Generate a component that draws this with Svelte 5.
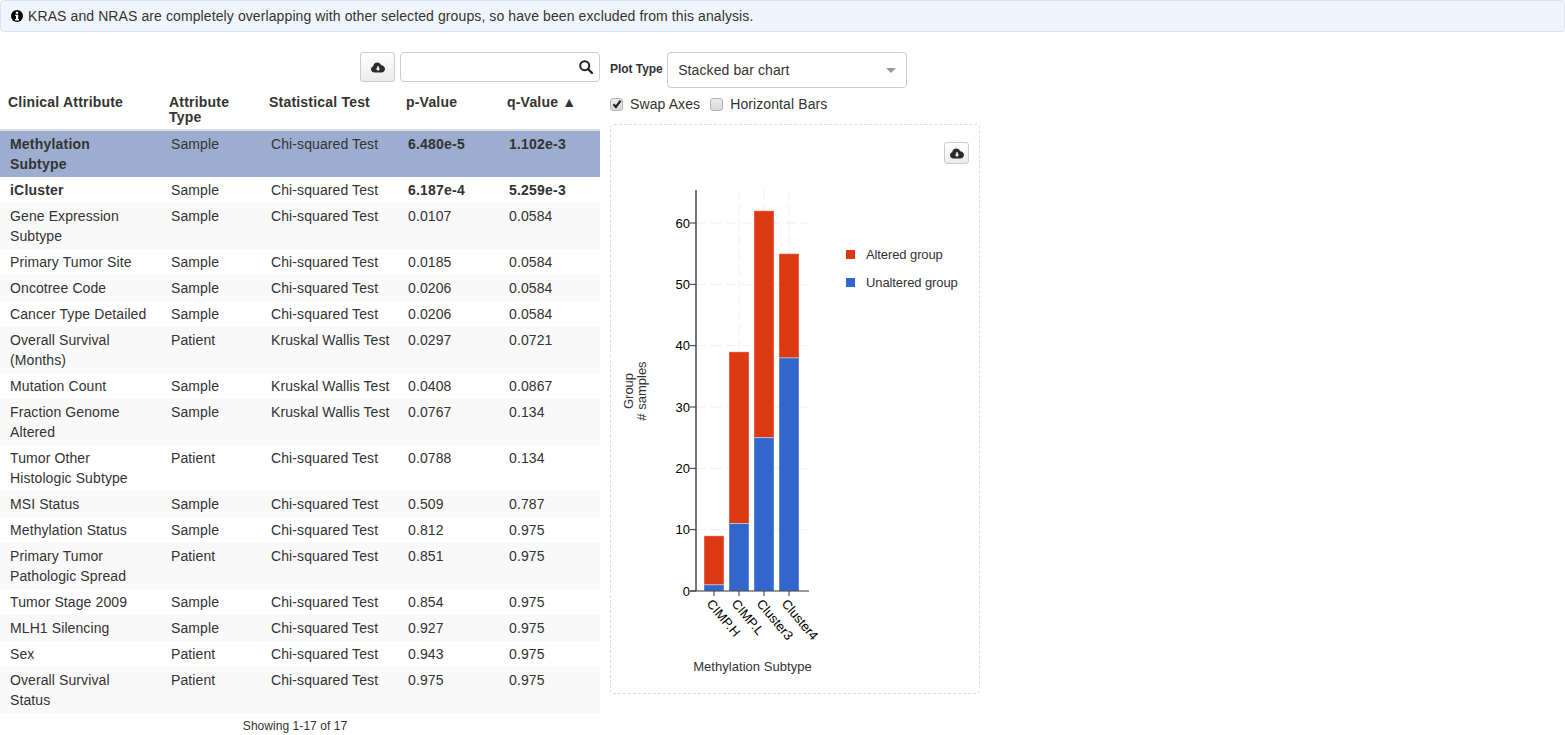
<script>
	const rows = [
		['Methylation Subtype', 'Sample', 'Chi-squared Test', '6.480e-5', '1.102e-3', 'sig'],
		['iCluster', 'Sample', 'Chi-squared Test', '6.187e-4', '5.259e-3', 'sig'],
		['Gene Expression Subtype', 'Sample', 'Chi-squared Test', '0.0107', '0.0584'],
		['Primary Tumor Site', 'Sample', 'Chi-squared Test', '0.0185', '0.0584'],
		['Oncotree Code', 'Sample', 'Chi-squared Test', '0.0206', '0.0584'],
		['Cancer Type Detailed', 'Sample', 'Chi-squared Test', '0.0206', '0.0584'],
		['Overall Survival (Months)', 'Patient', 'Kruskal Wallis Test', '0.0297', '0.0721'],
		['Mutation Count', 'Sample', 'Kruskal Wallis Test', '0.0408', '0.0867'],
		['Fraction Genome Altered', 'Sample', 'Kruskal Wallis Test', '0.0767', '0.134'],
		['Tumor Other Histologic Subtype', 'Patient', 'Chi-squared Test', '0.0788', '0.134'],
		['MSI Status', 'Sample', 'Chi-squared Test', '0.509', '0.787'],
		['Methylation Status', 'Sample', 'Chi-squared Test', '0.812', '0.975'],
		['Primary Tumor Pathologic Spread', 'Patient', 'Chi-squared Test', '0.851', '0.975'],
		['Tumor Stage 2009', 'Sample', 'Chi-squared Test', '0.854', '0.975'],
		['MLH1 Silencing', 'Sample', 'Chi-squared Test', '0.927', '0.975'],
		['Sex', 'Patient', 'Chi-squared Test', '0.943', '0.975'],
		['Overall Survival Status', 'Patient', 'Chi-squared Test', '0.975', '0.975']
	];

	// chart values, altered on top of unaltered
	const bars = [
		{ name: 'CIMP.H', unaltered: 1, altered: 8 },
		{ name: 'CIMP.L', unaltered: 11, altered: 28 },
		{ name: 'Cluster3', unaltered: 25, altered: 37 },
		{ name: 'Cluster4', unaltered: 38, altered: 17 }
	];
	const ticks = [0, 10, 20, 30, 40, 50, 60];
	const y0 = 466;
	const unit = 6.133;
	const yOf = (v) => y0 - v * unit;
	const xOf = (i) => 93 + i * 25;
</script>

{#snippet cloud()}
	<svg class="cloud" viewBox="0 0 16 12" width="14" height="11" aria-hidden="true">
		<path d="M3.800 11.600C1.700 11.600 0 10 0 8 0 6.400 1.100 5.100 2.500 4.600 2.700 2.200 4.700.3 7.200.3c2 0 3.700 1.200 4.400 3C14 3.400 16 5.200 16 7.600c0 2.200-1.900 4-4.200 4z" fill="#2b2b2b" />
		<path d="M7 4.600h2v2.500h1.700L8 9.900 5.300 7.100H7z" fill="#f4f4f4" />
	</svg>
{/snippet}

<div class="alert">
	<svg class="info" viewBox="0 0 12 12" width="12" height="12" aria-hidden="true">
		<circle cx="6" cy="6" r="6" fill="#000" />
		<rect x="4.800" y="1.700" width="2.400" height="2.100" fill="#fff" />
		<path d="M4.200 4.800h3v4.200h.8v1.400H4.100V9h.9V6.100h-.8z" fill="#fff" />
	</svg>
	<span>KRAS and NRAS are completely overlapping with other selected groups, so have been excluded from this analysis.</span>
</div>

<div class="page">
	<div class="left">
		<div class="toolbar">
			<button type="button" class="btn">{@render cloud()}</button>
			<div class="search">
				<input type="text" />
				<svg viewBox="0 0 14 14" width="14" height="14" aria-hidden="true">
					<circle cx="5.700" cy="5.700" r="4.500" fill="none" stroke="#222" stroke-width="2" />
					<path d="M9 9l4 4" stroke="#222" stroke-width="2.400" stroke-linecap="round" />
				</svg>
			</div>
		</div>

		<table>
			<colgroup>
				<col style="width:161px" />
				<col style="width:100px" />
				<col style="width:137px" />
				<col style="width:101px" />
				<col style="width:101px" />
			</colgroup>
			<thead>
				<tr>
					<th>Clinical Attribute</th>
					<th>Attribute Type</th>
					<th>Statistical Test</th>
					<th>p-Value</th>
					<th>q-Value ▲</th>
				</tr>
			</thead>
			<tbody>
				{#each rows as r, i}
					<tr class:selected={i === 0} class:odd={i % 2 === 0 && i > 0}>
						<td class="name" class:bold={r[5]}>{r[0]}</td>
						<td>{r[1]}</td>
						<td>{r[2]}</td>
						<td class:bold={r[5]}>{r[3]}</td>
						<td class:bold={r[5]}>{r[4]}</td>
					</tr>
				{/each}
			</tbody>
		</table>
		<div class="showing">Showing 1-17 of 17</div>
	</div>

	<div class="right">
		<div class="plot-type">
			<span class="plot-label">Plot Type</span>
			<div class="select">
				<span>Stacked bar chart</span>
				<i class="caret"></i>
			</div>
		</div>
		<div class="checks">
			<label>
				<span class="box">
					<svg viewBox="0 0 10 10" width="10" height="10" aria-hidden="true">
						<path d="M1.500 5.200l2.400 2.700 4.700-6.300" fill="none" stroke="#222" stroke-width="2.200" />
					</svg>
				</span>
				Swap Axes
			</label>
			<label><span class="box"></span> Horizontal Bars</label>
		</div>

		<div class="chart">
			<button type="button" class="btn small">{@render cloud()}</button>
			<svg class="plot" width="368" height="568" viewBox="0 0 368 568">
				<!-- grid -->
				{#each ticks.slice(1) as t}
					<line x1="85" x2="197" y1={yOf(t)} y2={yOf(t)} class="grid" />
				{/each}
				{#each [128, 153, 178] as x}
					<line x1={x} x2={x} y1="65" y2={y0} class="grid" />
				{/each}

				<!-- bars -->
				{#each bars as b, i}
					<rect x={xOf(i)} y={yOf(b.unaltered + b.altered)} width="20" height={b.altered * unit} fill="#dc3912" class="bar" />
					<rect x={xOf(i)} y={yOf(b.unaltered)} width="20" height={b.unaltered * unit} fill="#3366cc" class="bar" />
				{/each}

				<!-- axes -->
				<line x1="85" x2="85" y1="65" y2={y0} stroke="#757575" stroke-width="2" />
				<line x1="79" x2="198" y1={y0} y2={y0} stroke="#333" stroke-width="1" />
				{#each ticks as t}
					<line x1="79" x2="85" y1={yOf(t)} y2={yOf(t)} stroke="#333" />
					<text x="79" y={yOf(t) + 4.500} text-anchor="end" class="tick">{t}</text>
				{/each}
				{#each bars as b, i}
					<line x1={xOf(i) + 10} x2={xOf(i) + 10} y1={y0} y2={y0 + 5} stroke="#333" />
					<text transform="translate({xOf(i) + 2} {y0 + 13}) rotate(50)" class="tick">{b.name}</text>
				{/each}

				<text transform="translate(22 266) rotate(-90)" text-anchor="middle" class="label">Group</text>
				<text transform="translate(35 266) rotate(-90)" text-anchor="middle" class="label"># samples</text>
				<text x="141.500" y="546" text-anchor="middle" class="label title">Methylation Subtype</text>

				<!-- legend -->
				<rect x="235" y="125" width="9" height="9" fill="#dc3912" />
				<text x="255" y="134" class="label legend">Altered group</text>
				<rect x="235" y="153" width="9" height="9" fill="#3366cc" />
				<text x="255" y="162" class="label legend">Unaltered group</text>
			</svg>
		</div>
	</div>
</div>

<style>
	:global(body) {
		font-family: 'Liberation Sans', Arial, sans-serif;
		font-size: 14px;
		letter-spacing: 0.1px;
		color: #333;
		background: #fff;
		line-height: 20px;
	}

	.alert {
		display: flex;
		align-items: center;
		gap: 5px;
		height: 32px;
		box-sizing: border-box;
		padding: 0 10px;
		background: #f0f5fd;
		border: 1px solid #dde3ea;
		border-radius: 4px;
		margin-bottom: 20px;
	}

	.page {
		display: flex;
		gap: 10px;
		align-items: flex-start;
	}

	.left {
		width: 600px;
	}

	.toolbar {
		display: flex;
		justify-content: flex-end;
		gap: 5px;
		height: 30px;
	}

	.btn {
		display: flex;
		align-items: center;
		justify-content: center;
		width: 35px;
		height: 30px;
		padding: 0;
		border: 1px solid #ccc;
		border-radius: 3px;
		background: linear-gradient(#fff, #ebebeb);
	}

	.btn.small {
		position: absolute;
		top: 17px;
		right: 10px;
		width: 25px;
		height: 22px;
	}

	.search {
		position: relative;
		width: 200px;
	}

	.search input {
		width: 100%;
		height: 30px;
		box-sizing: border-box;
		border: 1px solid #ccc;
		border-radius: 4px;
		outline: none;
	}

	.search svg {
		position: absolute;
		right: 7px;
		top: 8px;
	}

	table {
		width: 600px;
		table-layout: fixed;
		border-collapse: collapse;
		margin-top: 10px;
	}

	th {
		font-size: 14px;
		letter-spacing: 0.2px;
		line-height: 15px;
		font-weight: 700;
		text-align: left;
		vertical-align: top;
		padding: 3px 8px 4px;
		border-bottom: 2px solid #ddd;
	}

	td {
		vertical-align: top;
		padding: 3px 5px 3px 10px;
		line-height: 20px;
		color: #333;
	}

	td.name {
		padding-right: 12px;
	}

	td.bold {
		font-weight: 700;
		letter-spacing: 0.2px;
	}

	tr.odd td {
		background: #f9f9f9;
	}

	tr.selected td {
		background: #9dadcf;
	}

	.showing {
		font-size: 12px;
		letter-spacing: 0.05px;
		text-align: center;
		width: 590px;
		padding-top: 3px;
	}

	.right {
		width: 370px;
	}

	.plot-type {
		display: flex;
		align-items: center;
		gap: 4.500px;
		height: 36px;
	}

	.plot-label {
		font-size: 12px;
		font-weight: 700;
		letter-spacing: -0.05px;
		position: relative;
		top: -1px;
	}

	.select {
		display: flex;
		align-items: center;
		justify-content: space-between;
		width: 240px;
		height: 36px;
		box-sizing: border-box;
		padding: 0 10px;
		border: 1px solid #ccc;
		border-radius: 4px;
	}

	.caret {
		width: 0;
		height: 0;
		border-left: 5px solid transparent;
		border-right: 5px solid transparent;
		border-top: 5px solid #999;
	}

	.checks {
		display: flex;
		gap: 10px;
		margin-top: 6px;
		height: 20px;
		align-items: center;
	}

	.checks label {
		display: flex;
		align-items: center;
		gap: 8px;
	}

	.box {
		display: flex;
		align-items: center;
		justify-content: center;
		width: 13px;
		height: 13px;
		margin-right: -1px;
		box-sizing: border-box;
		border: 1px solid #b5b5b5;
		border-radius: 3px;
		background: linear-gradient(#ececec, #d8d8d8);
	}

	.chart {
		position: relative;
		width: 370px;
		height: 570px;
		box-sizing: border-box;
		margin-top: 10px;
		border: 1px dashed #ddd;
		border-radius: 4px;
	}

	.plot {
		display: block;
	}

	.grid {
		stroke: #f0f0f0;
		stroke-dasharray: 10 5;
	}

	.bar {
		stroke: #fff;
		stroke-opacity: 0.4;
		stroke-width: 1;
	}

	.tick {
		font-size: 13px;
		letter-spacing: 0;
		fill: #000;
	}

	.label {
		font-size: 13px;
		letter-spacing: 0;
		fill: #333;
	}

	.label.title {
		letter-spacing: 0.05px;
	}

	.label.legend {
		letter-spacing: -0.1px;
	}
</style>
